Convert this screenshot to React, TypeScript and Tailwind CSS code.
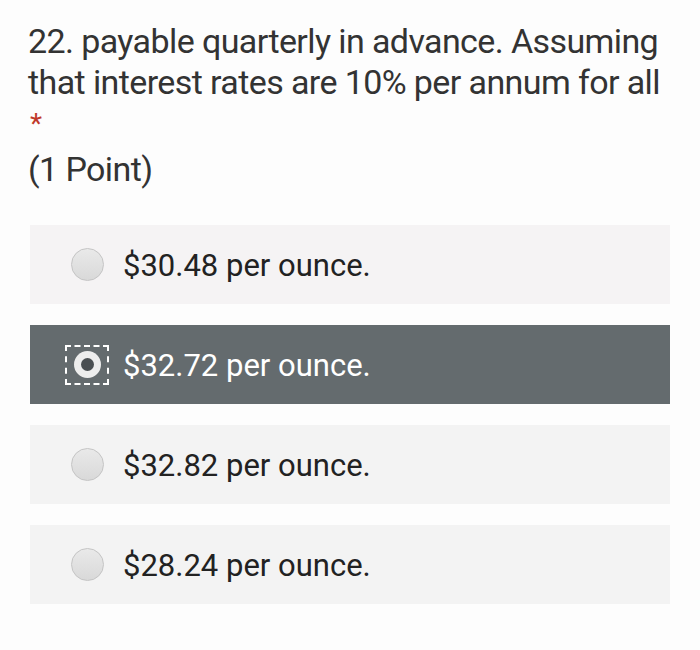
import React from "react";

const OPTIONS = [
  { id: "a", label: "$30.48 per ounce.", bg: "bg-[#f5f3f4]" },
  { id: "b", label: "$32.72 per ounce.", bg: "bg-[#646b6e]", selected: true },
  { id: "c", label: "$32.82 per ounce.", bg: "bg-[#f3f3f3]" },
  { id: "d", label: "$28.24 per ounce.", bg: "bg-[#f3f3f3]" },
];

function Radio({ selected }: { selected?: boolean }) {
  if (selected) {
    return (
      <div className="w-[44px] h-[40px] border-2 border-dashed border-white flex items-center justify-center shrink-0">
        <div className="w-[27px] h-[27px] rounded-full bg-[#ededed] flex items-center justify-center">
          <div className="w-[13px] h-[13px] rounded-full bg-[#4a4f52]"></div>
        </div>
      </div>
    );
  }
  return (
    <div className="w-[44px] h-[40px] flex items-center justify-center shrink-0">
      <div className="w-[33px] h-[33px] rounded-full border border-[#c4c4c4] bg-gradient-to-b from-[#e9e9e9] to-[#d9d9d9]"></div>
    </div>
  );
}

export default function App() {
  return (
    <div
      className="w-[700px] h-[650px] bg-[#fdfdfd] pt-[21px]"
      style={{ fontFamily: "Roboto, 'Liberation Sans', sans-serif" }}
    >
      <div className="pl-[28px] text-[#333] text-[34px] leading-[41px] tracking-[-0.6px]">
        <p>22. payable quarterly in advance. Assuming</p>
        <p>that interest rates are 10% per annum for all</p>
        <p className="text-[#c0392b] text-[28px] leading-[41px] pl-[2px]">*</p>
        <p className="mt-[5px]">(1 Point)</p>
      </div>

      <div className="mt-[35px] ml-[30px] w-[640px] flex flex-col gap-[21px]">
        {OPTIONS.map((o) => (
          <div
            key={o.id}
            className={`h-[79px] ${o.bg} flex items-center pl-[35px] gap-[14px]`}
          >
            <Radio selected={o.selected} />
            <span
              className={`text-[31px] pt-[3px] ${o.selected ? "text-white" : "text-[#222]"}`}
            >
              {o.label}
            </span>
          </div>
        ))}
      </div>
    </div>
  );
}
